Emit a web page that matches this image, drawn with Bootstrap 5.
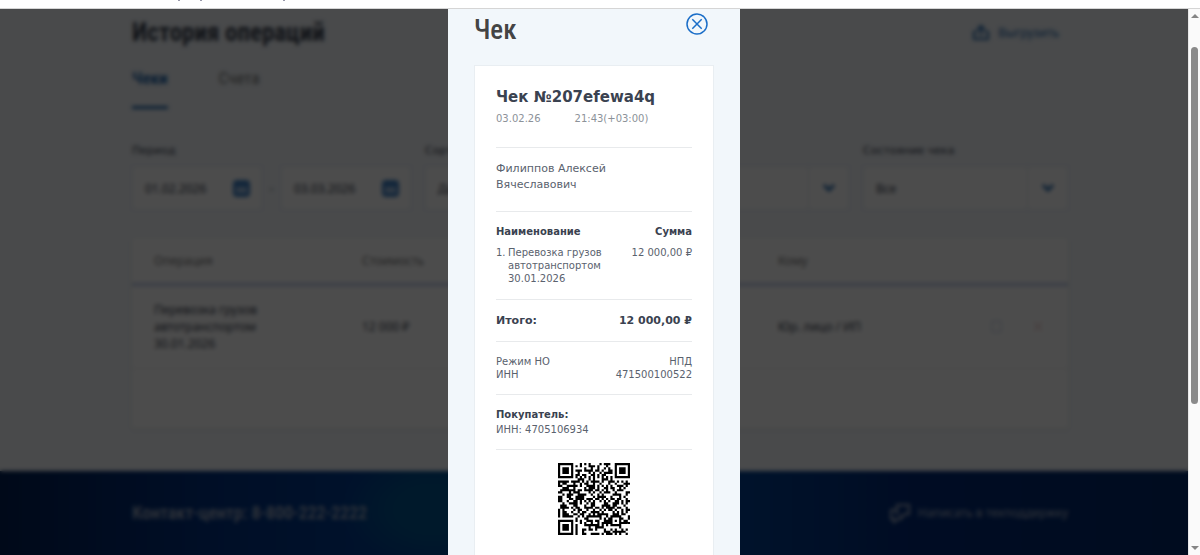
<!DOCTYPE html>
<html lang="ru">
<head>
<meta charset="utf-8">
<meta name="viewport" content="width=device-width, initial-scale=1">
<title>История операций — чек</title>
<link rel="stylesheet" href="https://cdn.jsdelivr.net/npm/bootstrap@5.3.0/dist/css/bootstrap.min.css">
<style>
  :root { --ink:#3a4250; --brand:#2468ac; --narrow:"Liberation Sans Narrow","Roboto Condensed","DejaVu Sans Condensed",sans-serif; }
  body { font-family:"DejaVu Sans","Noto Sans",sans-serif; font-size:11px; line-height:17px; color:var(--ink); background:#fff; overflow:hidden; }
  .browser-edge { height:9px; border-bottom:1px solid #d5d5d5; }
  .browser-edge svg { display:block; }
  .stage { background:#f3f7fb; min-width:0; }
  .page-layer { width:100vw; }
  .inner { max-width:936px; width:100%; margin-inline:auto; }
  .narrow { font-family:var(--narrow); font-weight:700; }
  .page-title { font-size:25px; line-height:48px; }
  .export-btn { font-size:12px; color:var(--brand); font-family:"Noto Sans",sans-serif; }
  .tab-link { font-family:var(--narrow); font-size:17px; line-height:42px; height:52px; color:#777; text-decoration:none; }
  .tab-link.active { color:var(--brand); font-weight:700; border-bottom:3px solid var(--brand); }
  .filters { margin-top:32px; }
  .filters label { font-size:11px; line-height:20px; display:block; margin-bottom:5px; }
  .filter-col { width:205px; }
  .field { height:44px; background:#fff; border:1px solid #e3ebf2; }
  .field input, .field select { border:0; background:none; appearance:none; font-size:12px; font-family:"Noto Sans",sans-serif; color:inherit; padding:0 12px; min-width:0; width:100%; height:100%; }
  .date-field { width:130px; padding-right:11px; }
  .arrow-box { width:40px; border-left:1px solid #dfe6ee; }
  .ops { background:#fff; margin-top:28px; table-layout:fixed; width:100%; box-shadow:0 1px 3px #dfe6e2; font-size:12px; }
  .ops th { font-weight:400; color:#777; height:46px; padding-left:22px; border-bottom:3px solid #b9c8e8; font-family:"Noto Sans",sans-serif; }
  .ops td { height:84px; padding-left:22px; border-bottom:1px solid #eee; font-family:"Noto Sans",sans-serif; }
  .ops .blank-row td { height:60px; border:0; }
  .site-footer { margin-top:43px; height:120px; color:#aab4c6; background:radial-gradient(ellipse 90px 60px at 36% 32%,#005590 40%,transparent),linear-gradient(90deg,#002055,#003080 17%,#003c90 30%,#003f90 62%,#002a78 75%,#002868); }
  .phone { font-size:18px; line-height:84px; font-weight:500; }
  .site-footer a { color:inherit; text-decoration:none; line-height:84px; font-family:"Noto Sans",sans-serif; font-size:12px; }
  .shade { inset:0; background:rgba(0,0,0,.7); backdrop-filter:blur(2px); }
  .receipt-panel { top:0; bottom:0; left:50%; width:292px; margin-left:-146px; background:#f2f7fb; padding:0 26px; overflow:hidden; }
  .panel-head { height:56px; }
  .panel-head h2 { font-size:27px; line-height:42px; color:#444; font-weight:500; }
  .close-btn { border:0; background:none; padding:0; margin:3px 5px 0 0; height:24px; }
  .close-btn svg { display:block; }
  .receipt { background:#fff; border:1px solid #e9eef2; border-bottom:0; width:240px; min-height:600px; padding:20px 21px; font-size:10px; line-height:13px; color:#5a626e; }
  .receipt section { border-bottom:1px solid #e8eaec; }
  .receipt h3 { font-size:15px; line-height:22px; font-weight:700; color:var(--ink); }
  .stamp { color:#8c9299; gap:34px; }
  .person { font-size:11px; line-height:16px; }
  .receipt strong { color:var(--ink); }
  .receipt .total { font-size:11px; line-height:16px; }
  .item-no { width:12px; }
  .qr { width:72px; height:72px; display:block; margin:13px auto 0; }
  .scroll-rail { width:12px; background:#fafafa; border-left:1px solid #e8e8e8; }
  .scroll-thumb { width:7px; height:357px; margin-top:29px; border-radius:4px; background:#8a8a8a; }
</style>
</head>
<body class="vh-100 d-flex flex-column">
<div class="browser-edge flex-shrink-0"><svg width="300" height="2" aria-hidden="true"><path d="M178 0h2v1h-2zM200 0h2v1h-2zM283 0h2v1h-2z" fill="#99a"/></svg></div>
<div class="d-flex flex-fill overflow-hidden">
  <div class="stage flex-fill position-relative overflow-hidden">
    <div class="page-layer">
      <main class="inner">
        <div class="d-flex justify-content-between align-items-center">
          <h1 class="narrow page-title mb-0">История операций</h1>
          <button class="btn p-0 export-btn d-flex align-items-center gap-2 me-2" type="button">
            <svg width="18" height="18" viewBox="0 0 18 18" fill="none" stroke="currentColor" stroke-width="2"><path d="M5 8H2v7h14V8h-3M9 12V3M5 6l4-4 4 4"/></svg>Выгрузить</button>
        </div>
        <nav class="d-flex" style="gap:51px">
          <a class="tab-link active" href="#checks">Чеки</a><a class="tab-link" href="#bills">Счета</a>
        </nav>
        <form class="filters d-flex justify-content-between">
          <div><label for="from">Период</label>
            <div class="d-flex align-items-center">
              <div class="field date-field d-flex align-items-center"><input id="from" type="text" value="01.02.2026"><svg class="flex-shrink-0" width="17" height="18" viewBox="0 0 17 18"><rect y="1" width="17" height="17" rx="4" fill="#3f80c4"/><path d="M3 8h11v6H3z" fill="#a0c0e4"/></svg></div>
              <span class="text-center" style="width:19px">-</span>
              <div class="field date-field d-flex align-items-center"><input aria-label="Конец периода" type="text" value="03.03.2026"><svg class="flex-shrink-0" width="17" height="18" viewBox="0 0 17 18"><rect y="1" width="17" height="17" rx="4" fill="#3f80c4"/><path d="M3 8h11v6H3z" fill="#a0c0e4"/></svg></div>
            </div></div>
          <div class="filter-col"><label for="sort">Сортировка</label><div class="field d-flex"><select id="sort"><option>Дата операции</option></select><span class="arrow-box flex-shrink-0"></span></div></div>
          <div class="filter-col"><label for="kind">&nbsp;</label><div class="field d-flex"><select id="kind" aria-label="Порядок"><option></option></select><span class="arrow-box flex-shrink-0 d-flex align-items-center justify-content-center"><svg width="14" height="8"><path d="M2 1l5 5 5-5" fill="none" stroke="#2468ac" stroke-width="3"/></svg></span></div></div>
          <div class="filter-col"><label for="state">Состояние чека</label><div class="field d-flex"><select id="state"><option>Все</option></select><span class="arrow-box flex-shrink-0 d-flex align-items-center justify-content-center"><svg width="14" height="8"><path d="M2 1l5 5 5-5" fill="none" stroke="#2468ac" stroke-width="3"/></svg></span></div></div>
        </form>
        <table class="ops">
          <colgroup><col style="width:208px"><col style="width:416px"><col><col style="width:110px"></colgroup>
          <thead><tr><th>Операция</th><th>Стоимость</th><th>Кому</th><th></th></tr></thead>
          <tbody><tr><td>Перевозка грузов<br>автотранспортом<br>30.01.2026</td><td>12 000 ₽</td><td>Юр. лицо / ИП</td>
            <td><svg width="70" height="16" fill="none" stroke-width="1"><path d="M12 2h9v11h-9z" stroke="#c0d0e4"/><path d="M54 3l8 9m0-9l-8 9" stroke="#e0a8a8"/></svg></td></tr>
            <tr class="blank-row"><td colspan="4"></td></tr></tbody>
        </table>
      </main>
      <footer class="site-footer">
        <div class="inner d-flex justify-content-between">
          <span class="narrow phone">Контакт-центр: 8-800-222-2222</span>
          <a href="#support" class="d-flex align-items-center gap-2"><svg width="21" height="21" viewBox="0 0 21 21" fill="none" stroke="currentColor" stroke-width="2"><path d="M8 12V2h12v9h-4l-3 3M8 7H2v9h3v3l4-3h3v-4"/></svg>Написать в техподдержку</a>
        </div>
      </footer>
    </div>
    <div class="shade position-absolute"></div>
    <div class="receipt-panel position-absolute" role="dialog" aria-labelledby="dlg-title">
      <div class="panel-head d-flex justify-content-between align-items-start">
        <h2 class="narrow mb-0" id="dlg-title">Чек</h2>
        <button class="close-btn" type="button" aria-label="Закрыть"><svg width="24" height="24" viewBox="0 0 24 24" fill="none" stroke="#1b6ec8" stroke-width="1.5"><circle cx="12" cy="12" r="10"/><path d="M7.3 7.3l9.4 9.4m0-9.4l-9.4 9.4"/></svg></button>
      </div>
      <article class="receipt">
        <section style="height:62px"><h3 class="mb-0 text-nowrap">Чек №207efewa4q</h3><div class="d-flex stamp pt-1"><span>03.02.26</span><span>21:43(+03:00)</span></div></section>
        <section class="person" style="height:64px;padding-top:13px">Филиппов Алексей<br>Вячеславович</section>
        <section style="height:88px;padding-top:13px">
          <div class="d-flex justify-content-between"><strong>Наименование</strong><strong>Сумма</strong></div>
          <div class="d-flex justify-content-between mt-2 text-nowrap"><span class="item-no">1.</span><span class="flex-fill">Перевозка грузов<br>автотранспортом<br>30.01.2026</span><span>12 000,00 ₽</span></div>
        </section>
        <section class="total d-flex justify-content-between" style="height:42px;padding-top:13px"><strong>Итого:</strong><strong>12 000,00 ₽</strong></section>
        <section style="height:53px;padding-top:13px"><div class="d-flex justify-content-between"><span>Режим НО</span><span>НПД</span></div><div class="d-flex justify-content-between"><span>ИНН</span><span>471500100522</span></div></section>
        <section style="height:55px;padding-top:13px"><strong class="d-block">Покупатель:</strong><div style="padding-top:2px">ИНН: 4705106934</div></section>
        <svg class="qr" id="qr" viewBox="0 0 33 33" role="img" aria-label="QR-код чека"></svg>
      </article>
    </div>
  </div>
  <div class="scroll-rail flex-shrink-0 d-flex flex-column align-items-center justify-content-between" aria-hidden="true">
    <div class="d-flex flex-column align-items-center"><svg class="mt-1" width="8" height="5"><path d="M0 5l4-4 4 4z" fill="#858585"/></svg><div class="scroll-thumb"></div></div>
    <svg class="mb-1" width="8" height="5"><path d="M0 0l4 4 4-4z" fill="#858585"/></svg>
  </div>
</div>
<script src="https://cdn.jsdelivr.net/npm/bootstrap@5.3.0/dist/js/bootstrap.bundle.min.js"></script>
<script>
// QR code, version 4, level L, mask 2, byte mode: 80 data and 20 correction codewords.
function makeQr(text) {
  const N = 33, MASK = 2, bits = [];
  const put = (v, n) => { for (let i = n - 1; i >= 0; i--) bits.push(v >> i & 1); };
  put(4, 4); put(text.length, 8);
  for (const c of text) put(c.charCodeAt(0), 8);
  put(0, 4);
  while (bits.length % 8) bits.push(0);
  const data = [];
  for (let i = 0; i < bits.length; i += 8) data.push(parseInt(bits.slice(i, i + 8).join(''), 2));
  for (let p = 0xEC; data.length < 80; p ^= 0xEC ^ 0x11) data.push(p);
  const mul = (a, b) => { let r = 0; for (let i = 7; i >= 0; i--) { r = (r << 1) ^ ((r >> 7) * 0x11D); r ^= (b >> i & 1) * a; } return r; };
  const gen = Array(20).fill(0); gen[19] = 1;
  for (let i = 0, root = 1; i < 20; i++, root = mul(root, 2))
    for (let j = 0; j < 20; j++) { gen[j] = mul(gen[j], root); if (j < 19) gen[j] ^= gen[j + 1]; }
  const ecc = Array(20).fill(0);
  for (const b of data) { const f = b ^ ecc.shift(); ecc.push(0); gen.forEach((g, i) => ecc[i] ^= mul(g, f)); }
  const all = data.concat(ecc);
  const m = Array.from({length: N}, () => Array(N).fill(0)), fix = m.map(r => r.slice());
  const set = (x, y, v) => { m[y][x] = v ? 1 : 0; fix[y][x] = 1; };
  for (let i = 0; i < N; i++) { set(6, i, i % 2 == 0); set(i, 6, i % 2 == 0); }
  for (const [cx, cy] of [[3, 3], [N - 4, 3], [3, N - 4]])
    for (let dy = -4; dy <= 4; dy++) for (let dx = -4; dx <= 4; dx++) {
      const d = Math.max(Math.abs(dx), Math.abs(dy)), x = cx + dx, y = cy + dy;
      if (x >= 0 && x < N && y >= 0 && y < N) set(x, y, d != 2 && d != 4);
    }
  for (let dy = -2; dy <= 2; dy++) for (let dx = -2; dx <= 2; dx++) set(26 + dx, 26 + dy, Math.max(Math.abs(dx), Math.abs(dy)) != 1);
  const head = 8 | MASK; let rem = head;
  for (let i = 0; i < 10; i++) rem = (rem << 1) ^ ((rem >> 9) * 0x537);
  const f = (head << 10 | rem) ^ 0x5412, b = i => f >> i & 1;
  for (let i = 0; i <= 5; i++) set(8, i, b(i));
  set(8, 7, b(6)); set(8, 8, b(7)); set(7, 8, b(8));
  for (let i = 9; i < 15; i++) set(14 - i, 8, b(i));
  for (let i = 0; i < 8; i++) set(N - 1 - i, 8, b(i));
  for (let i = 8; i < 15; i++) set(8, N - 15 + i, b(i));
  set(8, N - 8, 1);
  let n = 0;
  for (let right = N - 1; right >= 1; right -= 2) {
    if (right == 6) right = 5;
    for (let v = 0; v < N; v++) for (let j = 0; j < 2; j++) {
      const x = right - j, y = ((right + 1) & 2) == 0 ? N - 1 - v : v;
      if (fix[y][x]) continue;
      if (n < 800) { m[y][x] = all[n >> 3] >> (7 - (n & 7)) & 1; n++; }
      if (x % 3 == 0) m[y][x] ^= 1;
    }
  }
  return m;
}
const grid = makeQr('https://lknpd.nalog.ru/api/v1/receipt/471500100522/207efewa4q/print');
let d = '';
grid.forEach((row, y) => row.forEach((v, x) => { if (v) d += `M${x} ${y}h1v1h-1z`; }));
document.getElementById('qr').innerHTML = `<path d="${d}"/>`;
</script>
</body>
</html>
